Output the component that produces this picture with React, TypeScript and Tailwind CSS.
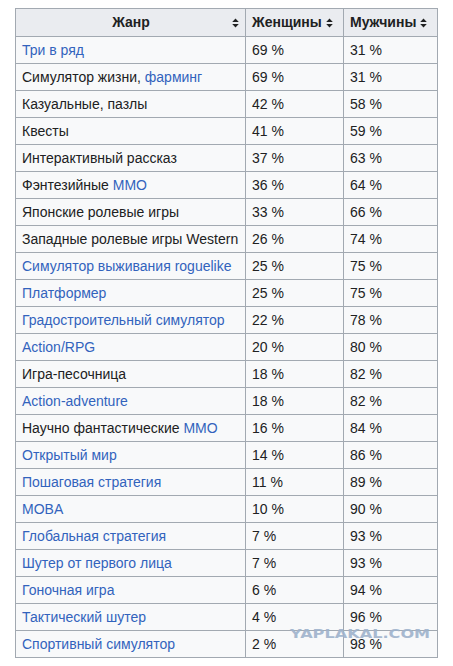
type Part = { t: string; link?: boolean };
type Row = { genre: Part[]; f: number; m: number };

const L = (t: string): Part => ({ t, link: true });
const T = (t: string): Part => ({ t });

const rows: Row[] = [
  { genre: [L('Три в ряд')], f: 69, m: 31 },
  { genre: [T('Симулятор жизни, '), L('фарминг')], f: 69, m: 31 },
  { genre: [T('Казуальные, пазлы')], f: 42, m: 58 },
  { genre: [T('Квесты')], f: 41, m: 59 },
  { genre: [T('Интерактивный рассказ')], f: 37, m: 63 },
  { genre: [T('Фэнтезийные '), L('MMO')], f: 36, m: 64 },
  { genre: [T('Японские ролевые игры')], f: 33, m: 66 },
  { genre: [T('Западные ролевые игры Western')], f: 26, m: 74 },
  { genre: [L('Симулятор выживания roguelike')], f: 25, m: 75 },
  { genre: [L('Платформер')], f: 25, m: 75 },
  { genre: [L('Градостроительный симулятор')], f: 22, m: 78 },
  { genre: [L('Action/RPG')], f: 20, m: 80 },
  { genre: [T('Игра-песочница')], f: 18, m: 82 },
  { genre: [L('Action-adventure')], f: 18, m: 82 },
  { genre: [T('Научно фантастические '), L('MMO')], f: 16, m: 84 },
  { genre: [L('Открытый мир')], f: 14, m: 86 },
  { genre: [L('Пошаговая стратегия')], f: 11, m: 89 },
  { genre: [L('MOBA')], f: 10, m: 90 },
  { genre: [L('Глобальная стратегия')], f: 7, m: 93 },
  { genre: [L('Шутер от первого лица')], f: 7, m: 93 },
  { genre: [L('Гоночная игра')], f: 6, m: 94 },
  { genre: [L('Тактический шутер')], f: 4, m: 96 },
  { genre: [L('Спортивный симулятор')], f: 2, m: 98 },
];

function SortIcon() {
  return (
    <svg width="7" height="10" viewBox="0 0 7 10" className="inline-block">
      <path d="M3.5 0.5 L6.8 4 L0.2 4 Z M0.2 6 L6.8 6 L3.5 9.5 Z" fill="#202122" />
    </svg>
  );
}

export default function App() {
  return (
    <div className="relative w-[453px] h-[666px] bg-white pt-2 pl-[15px] font-['Liberation_Sans',Arial,sans-serif] text-[14px] text-[#202122]">
      <table className="border-collapse w-[422px] table-fixed">
        <colgroup>
          <col className="w-[230px]" />
          <col className="w-[98px]" />
          <col className="w-[94px]" />
        </colgroup>
        <thead>
          <tr className="h-[28px] bg-[#eaecf0]">
            <th className="border border-[#a2a9b1] px-[6px] font-bold">
              <div className="flex items-center">
                <span className="flex-1 text-center pl-2">Жанр</span>
                <SortIcon />
              </div>
            </th>
            <th className="border border-[#a2a9b1] px-[6px] font-bold text-left">
              <div className="flex items-center gap-[4px]">
                <span>Женщины</span>
                <SortIcon />
              </div>
            </th>
            <th className="border border-[#a2a9b1] px-[6px] font-bold text-left">
              <div className="flex items-center gap-[4px]">
                <span>Мужчины</span>
                <SortIcon />
              </div>
            </th>
          </tr>
        </thead>
        <tbody>
          {rows.map((r, i) => (
            <tr key={i} className="h-[27px] bg-[#f8f9fa]">
              <td className="border border-[#a2a9b1] px-[6px] leading-none whitespace-nowrap">
                {r.genre.map((p, j) => (
                  <span key={j} className={p.link ? 'text-[#3263bd]' : ''}>
                    {p.t}
                  </span>
                ))}
              </td>
              <td className="border border-[#a2a9b1] px-[6px] leading-none">{r.f} %</td>
              <td className="border border-[#a2a9b1] px-[6px] leading-none">{r.m} %</td>
            </tr>
          ))}
        </tbody>
      </table>
      <div className="absolute left-[290px] top-[628px] origin-left scale-x-[1.29] font-['DejaVu_Sans',sans-serif] font-bold text-[12.5px] leading-none text-[#9fb3cc] opacity-90">
        YAPLAKAL.COM
      </div>
    </div>
  );
}
